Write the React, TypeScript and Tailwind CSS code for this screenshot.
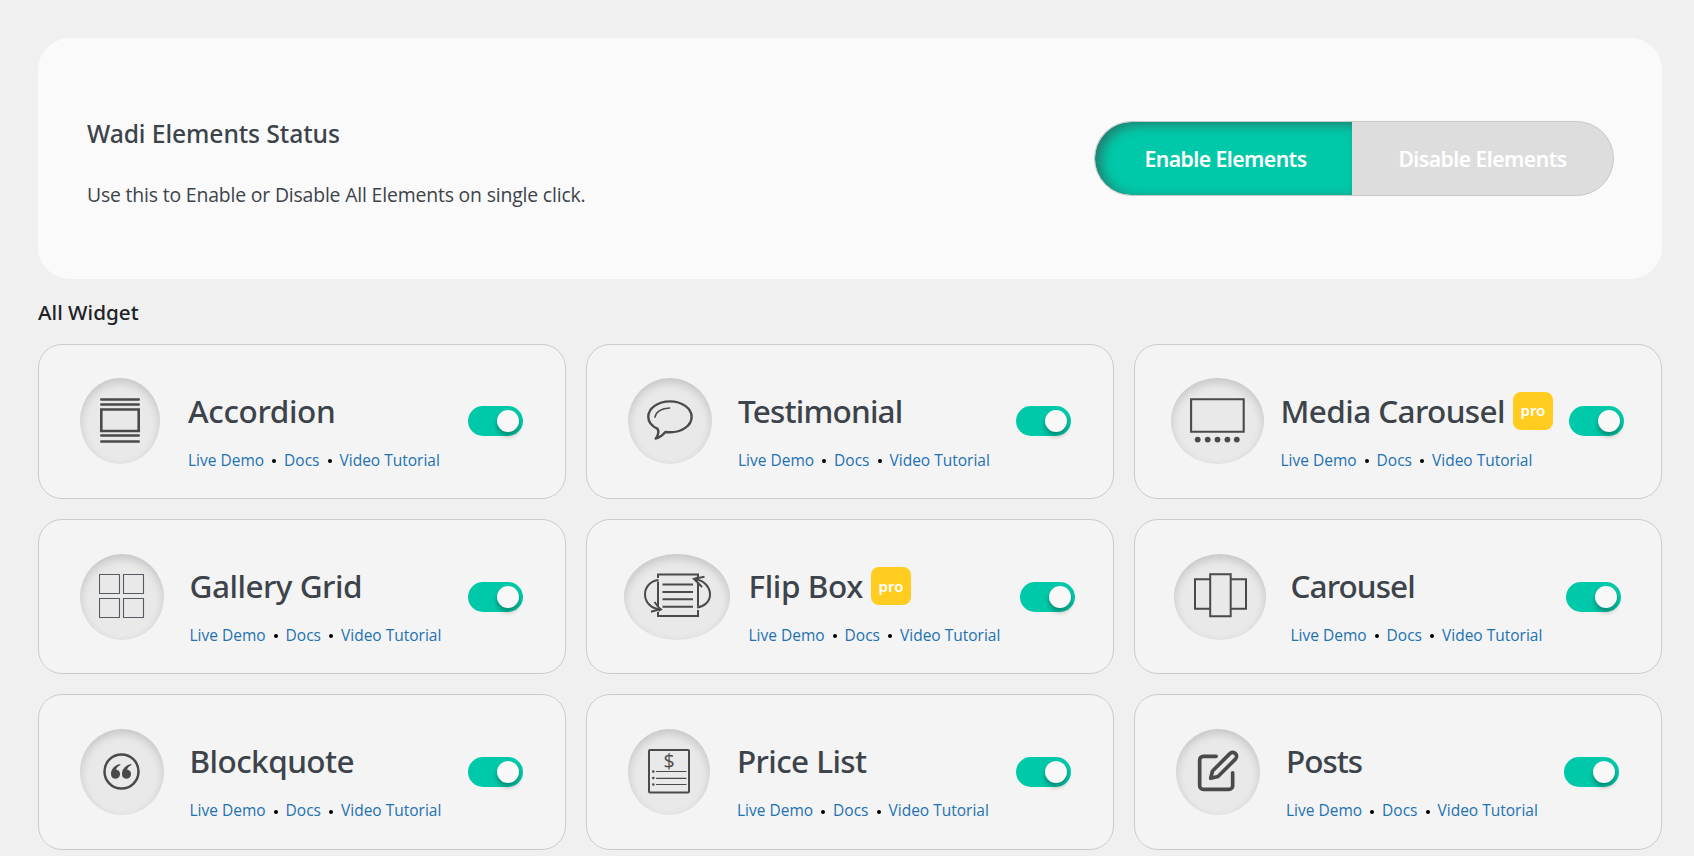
import type { ReactNode } from "react";
import { FiEdit } from "react-icons/fi";

const INK = "#4a4a4a";

const AccordionIcon = () => (
  <svg width="40" height="45" viewBox="0 0 40 45" fill="none" stroke={INK} strokeWidth="2.6">
    <path d="M1.300 1.500h37.400M1.300 6.500h37.400M1.300 37.500h37.400M1.300 43.500h37.400" strokeLinecap="round" />
    <path d="M1.300 11.500h37.400v21.500H1.300z" />
  </svg>
);

const TestimonialIcon = () => (
  <svg width="46" height="40" viewBox="0 0 46 40" fill="none" stroke={INK} strokeWidth="2.4" strokeLinecap="round" strokeLinejoin="round">
    <path d="M10.6 28.9C4.9 26 1.3 21.600 1.3 16.9 1.300 8.200 10.900 1.400 22.900 1.400s21.700 6.800 21.700 15.500-9.700 15.400-21.700 15.400c-1.600 0-3.100-.1-4.600-.3-2.600 3.200-5.800 5.700-9.600 6.500 2.600-3.300 3.500-6.500 1.900-9.600z" />
    <path d="M8 17.200C8.900 12 14.400 8.200 22.600 8" strokeWidth="1.500" />
  </svg>
);

const MediaCarouselIcon = () => (
  <svg width="55" height="45" viewBox="0 0 55 45" fill="none">
    <path d="M1.100 1.300h52.600v32.500H1.100z" stroke={INK} strokeWidth="2.100" />
    <g fill={INK}>
      <circle cx="7.700" cy="41.600" r="2.900" />
      <circle cx="17.700" cy="41.600" r="2.900" />
      <circle cx="27.500" cy="41.600" r="2.900" />
      <circle cx="37.400" cy="41.600" r="2.900" />
      <circle cx="46.800" cy="41.600" r="2.900" />
    </g>
  </svg>
);

const GalleryIcon = () => (
  <svg width="46" height="44" viewBox="0 0 46 44" fill="none" stroke="#545b63" strokeWidth="1.100">
    <path d="M.5.5h20v19H.5zM24.500.5h20v19h-20zM.5 24.500h20v19H.5zM24.500 24.500h20v19h-20z" />
  </svg>
);

const FlipBoxIcon = () => (
  <svg width="67" height="45" viewBox="0 0 67 45" fill="none" stroke={INK} strokeWidth="2">
    <path d="M14 5V1.500h40V4.500M54 10v23M54 37v6H14v-4M14 8.500V33" />
    <path d="M18.500 11.400h30.500M18.500 19h30.500M18.500 26.200h30.500M18.500 33.700h30.500" />
    <path d="M14.500 7C7 7.500 1 13.800 1 21.500S7 35 14.500 36.200M53 34.500C60.500 33.500 66 28.500 66 21.500S60.500 7.500 52 6.500" />
    <path d="M10.500 29l5.500 7.200L7 38.800M60.500 3.800L50 5.800l8 8.200" strokeWidth="2" />
    <path d="M14.500 33.500l4.300 3-4.300 2.600zM53.500 3.500l-4.300 2.600 4.300 2.600z" fill={INK} stroke="none" />
  </svg>
);

const CarouselIcon = () => (
  <svg width="53" height="45" viewBox="0 0 53 45" fill="none" stroke={INK} strokeWidth="2">
    <path d="M16 6.300H1v29.400h15M37 6.300h15v29.400H37" />
    <path d="M16.200 1.300h20.500v42H16.200z" />
  </svg>
);

const BlockquoteIcon = () => (
  <svg width="37" height="37" viewBox="0 0 37 37" className="mr-px">
    <circle cx="18.500" cy="18.500" r="17" fill="none" stroke={INK} strokeWidth="2.500" />
    <path
      d="M17.200 11C11.500 12.200 8 16 8 21.200a4.500 4.500 0 1 0 5.200-4.500c.3-1.900 1.900-3.500 4.300-4.700zM28.200 11C22.500 12.200 19 16 19 21.200a4.500 4.500 0 1 0 5.200-4.500c.3-1.900 1.900-3.500 4.300-4.700z"
      fill={INK}
    />
  </svg>
);

const PriceListIcon = () => (
  <svg width="42" height="45" viewBox="0 0 42 45" fill="none" stroke={INK} className="overflow-visible">
    <rect x="1" y="1" width="40" height="42.500" rx="1" strokeWidth="2" />
    <text x="21" y="18.800" textAnchor="middle" fontSize="19.500" fill={INK} stroke="none" className="font-['Open_Sans',sans-serif]">$</text>
    <path d="M8.500 22.500H38M8.500 29.300H38M8.500 35.500H38" strokeWidth="1.200" strokeLinecap="round" />
    <g fill={INK} stroke="none">
      <circle cx="5.300" cy="22.500" r="1.300" />
      <circle cx="5.300" cy="29" r="1.300" />
      <circle cx="5.300" cy="35.500" r="1.300" />
    </g>
  </svg>
);

type Widget = { title: string; icon: ReactNode; pro?: boolean; card: string; circle: string; tracking: string };

const widgets: Widget[] = [
  { title: "Accordion", icon: <AccordionIcon />, card: "pl-[41px] pr-[42px]", circle: "w-20 mr-[27.5px]", tracking: "tracking-[-0.35px]" },
  { title: "Testimonial", icon: <TestimonialIcon />, card: "pl-[41px] pr-[42px]", circle: "w-[84px] mr-[25.500px]", tracking: "tracking-[-0.8px]" },
  { title: "Media Carousel", icon: <MediaCarouselIcon />, pro: true, card: "pl-9 pr-[37px]", circle: "w-[93px] mr-4", tracking: "tracking-[-0.6px]" },
  { title: "Gallery Grid", icon: <GalleryIcon />, card: "pl-[41px] pr-[42px]", circle: "w-[84px] mr-[25px]", tracking: "tracking-[-0.5px]" },
  { title: "Flip Box", icon: <FlipBoxIcon />, pro: true, card: "pl-[37px] pr-[38px]", circle: "w-[106px] mr-[18px]", tracking: "tracking-[-0.4px]" },
  { title: "Carousel", icon: <CarouselIcon />, card: "pl-[39px] pr-10", circle: "w-[92px] mr-6", tracking: "tracking-[-0.9px]" },
  { title: "Blockquote", icon: <BlockquoteIcon />, card: "pl-[41px] pr-[42px]", circle: "w-[84px] mr-[25px]", tracking: "tracking-[-0.55px]" },
  { title: "Price List", icon: <PriceListIcon />, card: "pl-[41px] pr-[42px]", circle: "w-[82px] mr-[26.500px]", tracking: "tracking-[-0.6px]" },
  { title: "Posts", icon: <FiEdit size={44} color={INK} />, card: "pl-[41px] pr-[42px]", circle: "w-[84px] mr-[25.500px]", tracking: "tracking-[-1px]" },
];

const Dot = () => <span className="mt-[3px] size-1 rounded-full bg-black" />;

function WidgetCard({ title, icon, pro, card, circle, tracking }: Widget) {
  return (
    <article className={`flex h-[155.4px] items-center rounded-3xl border border-[#cccccc] bg-[#f4f4f4] ${card}`}>
      <div className={`flex h-[86px] shrink-0 items-center justify-center rounded-[50%] bg-[#e9e9e9] pb-0.5 shadow-[inset_0_4px_10px_rgba(0,0,0,0.16)] ${circle}`}>
        {icon}
      </div>
      <div className="pt-[16.500px] pl-[0.5px]">
        <div className="flex h-11 items-center gap-2">
          <h3 className={`text-[31.5px] leading-[44px] font-medium whitespace-nowrap text-[#3c434a] ${tracking}`}>{title}</h3>
          {pro && (
            <span className="flex h-[38px] w-10 items-center justify-center rounded-lg bg-[#ffcc1f] text-[15px] font-semibold text-white">pro</span>
          )}
        </div>
        <div className="mt-4 flex items-center gap-2 font-['Open_Sans','Noto_Sans',sans-serif] text-[15.5px] leading-[22px] whitespace-nowrap text-[#2271b1]">
          <a href="#demo">Live Demo</a>
          <Dot />
          <a href="#docs">Docs</a>
          <Dot />
          <a href="#video">Video Tutorial</a>
        </div>
      </div>
      <button className="ml-auto flex h-[30px] w-[55px] shrink-0 items-center justify-end rounded-full bg-[#00c9a9] pr-[4.500px]" aria-label={title}>
        <span className="size-[22px] rounded-full bg-[#f8f8f8] shadow-[0_4px_5px_rgba(0,0,0,0.3)]" />
      </button>
    </article>
  );
}

export default function App() {
  return (
    <main className="h-[856px] overflow-hidden bg-[#f0f0f0] pt-[38px] pr-8 pl-[38px] font-['Noto_Sans',sans-serif]">
      <section className="flex h-[241px] items-center justify-between rounded-[32px] bg-[#fafafa] pr-12 pl-[49px]">
        <div className="pt-[7px]">
          <h2 className="text-[24.700px] leading-9 font-medium tracking-[-0.1px] text-[#3c434a]">Wadi Elements Status</h2>
          <p className="mt-[29px] font-['Open_Sans','Noto_Sans',sans-serif] text-[19.400px] leading-7 tracking-[-0.170px] text-[#3c434a]">
            Use this to Enable or Disable All Elements on single click.
          </p>
        </div>
        <div className="flex h-[75px] w-[520px] overflow-hidden rounded-full border border-[#c8c8c8] bg-[#dddddd] text-[21.200px] font-semibold tracking-[-0.55px] whitespace-nowrap text-white">
          <button className="w-[257px] rounded-l-full bg-[#00c9a9] pl-1 shadow-[inset_6px_3px_12px_rgba(64,64,64,0.55)]">Enable Elements</button>
          <button className="flex-1">Disable Elements</button>
        </div>
      </section>
      <h2 className="mt-[18px] h-[46.600px] text-[20.700px] leading-[30px] font-medium text-[#1d2327]">All Widget</h2>
      <div className="grid grid-cols-3 gap-5">
        {widgets.map((w) => (
          <WidgetCard key={w.title} {...w} />
        ))}
      </div>
    </main>
  );
}
